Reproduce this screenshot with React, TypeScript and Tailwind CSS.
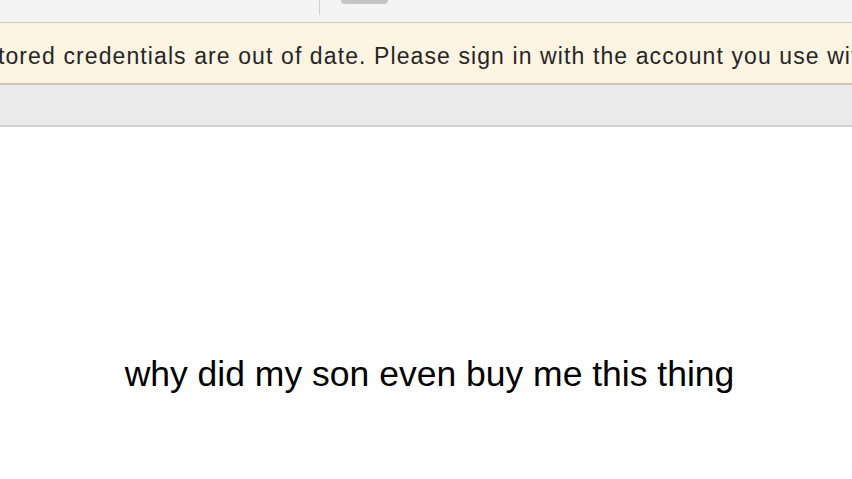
export default function App() {
  return (
    <div className="flex h-[479px] w-[852px] flex-col overflow-hidden bg-white font-['Liberation_Sans',Arial,sans-serif]">
      <header className="flex h-[23px] shrink-0 border-b border-[#c9c9c9] bg-[#f4f4f4]">
        <div className="ml-[319px] h-[15px] w-px bg-[#cfcfcf]" />
        <div className="ml-[21px] h-[4px] w-[47px] rounded-b-[5px] bg-[#c4c4c4]" />
      </header>

      <div className="flex h-[62px] shrink-0 items-center overflow-hidden border-b-2 border-[#ccc7b2] bg-[#fdf4e2]">
        <p className="ml-[-73px] mt-[6px] whitespace-nowrap text-[23px] tracking-[1.1px] text-[#262626]">
          Your stored credentials are out of date. Please sign in with the account you use with this device.
        </p>
      </div>

      <div className="h-[42px] shrink-0 border-b-2 border-[#d2d2d2] bg-[#ebebeb]" />

      <main className="flex flex-1 items-start justify-center pl-[7px] pt-[230px]">
        <h1 className="text-[35.5px] leading-none text-black">why did my son even buy me this thing</h1>
      </main>
    </div>
  );
}
